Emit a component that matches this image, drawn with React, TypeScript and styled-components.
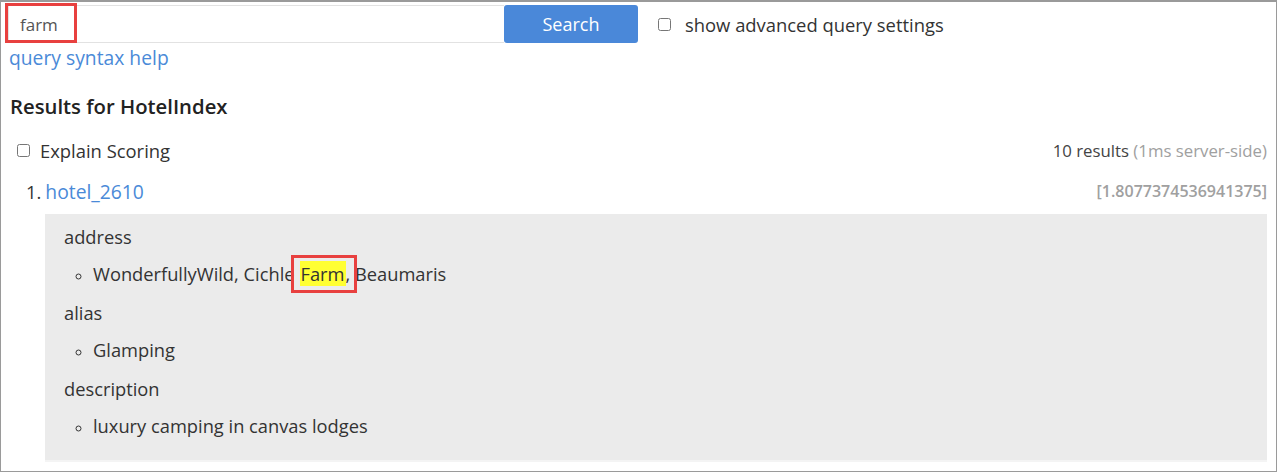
import React from "react"
import styled, { createGlobalStyle } from "styled-components"

const GlobalStyle = createGlobalStyle`
  html, body {
    margin: 0;
    padding: 0;
    background: #fff;
  }
  body {
    font-family: "Open Sans", "Liberation Sans", sans-serif;
    color: #333;
  }
`

const Frame = styled.div`
  box-sizing: border-box;
  width: 1277px;
  height: 472px;
  border: 1px solid #9a9a9a;
  border-top-width: 2px;
  padding: 3px 9px 0 7px;
  overflow: hidden;
  display: flex;
  flex-direction: column;
`

const SearchRow = styled.div`
  display: flex;
  align-items: center;
  height: 38px;
`

const InputWrap = styled.div`
  position: relative;
  width: 496px;
  height: 38px;
`

const QueryInput = styled.input`
  box-sizing: border-box;
  width: 100%;
  height: 100%;
  border: 1px solid #e2e2e2;
  border-right: none;
  padding: 0 0 0 11px;
  font-family: inherit;
  font-size: 17px;
  color: #555;
  outline: none;
`

const Annotation = styled.span`
  position: absolute;
  border: 3px solid #e8403f;
  pointer-events: none;
`

const InputAnnotation = styled(Annotation)`
  left: -3px;
  top: -2px;
  width: 66px;
  height: 34px;
`

const SearchButton = styled.button`
  width: 134px;
  height: 38px;
  border: none;
  border-radius: 3px;
  background: #4a88d9;
  color: #fff;
  font-family: inherit;
  font-size: 18px;
  cursor: pointer;
`

const CheckLabel = styled.label<{ $gap?: number; $space?: number }>`
  display: flex;
  align-items: center;
  font-size: 18.4px;
  color: #333;
  margin-left: ${({ $gap }) => $gap ?? 0}px;

  input {
    margin: 0 ${({ $space }) => $space ?? 13}px 0 0;
    width: 13px;
    height: 13px;
  }
`

const HelpLink = styled.a`
  display: block;
  line-height: 30px;
  margin-left: 1px;
  font-size: 19.3px;
  color: #4a8ad8;
  text-decoration: none;
`

const Heading = styled.h2`
  margin: 21px 0 0 2px;
  line-height: 24px;
  font-size: 20.3px;
  font-weight: 600;
  color: #222;
`

const MetaRow = styled.div`
  display: flex;
  justify-content: space-between;
  align-items: center;
  height: 24px;
  margin: 20px 0 0 9px;
`

const ResultCount = styled.span`
  font-size: 16.8px;
  color: #444;
`

const Muted = styled.span`
  color: #a0a0a0;
`

const ResultHead = styled.div`
  display: flex;
  justify-content: space-between;
  align-items: center;
  height: 24px;
  margin: 17px 0 0 18px;
  font-size: 18.4px;
`

const ResultLink = styled.a`
  color: #4a8ad8;
  text-decoration: none;
  font-size: 19.3px;
  margin-left: 4px;
`

const Score = styled.span`
  font-size: 16px;
  font-weight: 600;
  color: #a0a0a0;
`

const Fields = styled.div`
  margin: 11px 0 0 37px;
  padding: 11px 19px 22px;
  background: #ebebeb;
  border-bottom: 2px solid #f4f4f4;
  font-size: 18.3px;
`

const FieldName = styled.div<{ $top?: number }>`
  line-height: 24px;
  margin-top: ${({ $top }) => $top ?? 0}px;
`

const ValueList = styled.ul`
  list-style: circle;
  margin: 13px 0 0;
  padding-left: 29px;
  line-height: 24px;

  li::marker {
    font-size: 15px;
  }
`

const Highlight = styled.mark`
  position: relative;
  background: #ffff33;
  color: #333;
  padding: 0 1px;
  margin-left: 5px;
`

const MarkAnnotation = styled(Annotation)`
  left: -9px;
  top: -6px;
  right: -11px;
  bottom: -7px;
`

type Field = {
  name: string
  values: React.ReactNode[]
}

const fields: Field[] = [
  {
    name: "address",
    values: [
      <>
        WonderfullyWild, Cichle
        <Highlight>
          Farm
          <MarkAnnotation />
        </Highlight>
        , Beaumaris
      </>,
    ],
  },
  { name: "alias", values: ["Glamping"] },
  { name: "description", values: ["luxury camping in canvas lodges"] },
]

export default function App() {
  return (
    <>
      <GlobalStyle />
      <Frame>
        <SearchRow>
          <InputWrap>
            <QueryInput defaultValue="farm" />
            <InputAnnotation />
          </InputWrap>
          <SearchButton>Search</SearchButton>
          <CheckLabel $gap={20} $space={14}>
            <input type="checkbox" />
            show advanced query settings
          </CheckLabel>
        </SearchRow>
        <HelpLink href="#">query syntax help</HelpLink>
        <Heading>Results for HotelIndex</Heading>
        <MetaRow>
          <CheckLabel $space={10}>
            <input type="checkbox" />
            Explain Scoring
          </CheckLabel>
          <ResultCount>
            10 results <Muted>(1ms server-side)</Muted>
          </ResultCount>
        </MetaRow>
        <ResultHead>
          <span>
            1.<ResultLink href="#">hotel_2610</ResultLink>
          </span>
          <Score>[1.8077374536941375]</Score>
        </ResultHead>
        <Fields>
          {fields.map((f, i) => (
            <React.Fragment key={f.name}>
              <FieldName $top={i === 0 ? 0 : 15}>{f.name}</FieldName>
              <ValueList>
                {f.values.map((v, j) => (
                  <li key={j}>{v}</li>
                ))}
              </ValueList>
            </React.Fragment>
          ))}
        </Fields>
      </Frame>
    </>
  )
}
